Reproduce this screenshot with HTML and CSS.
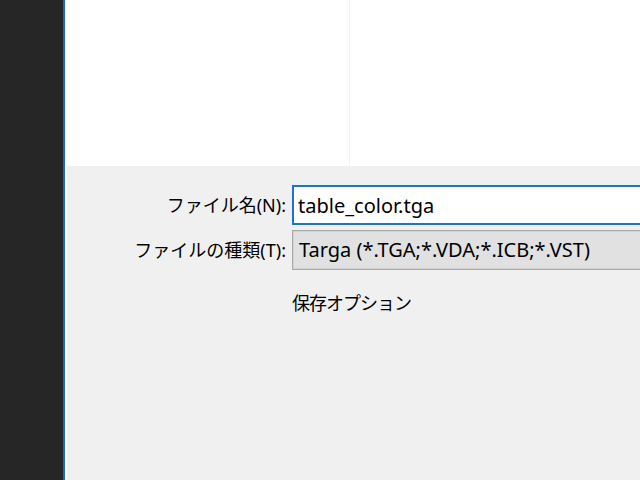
FILE: index.html
```html
<!DOCTYPE html>
<html lang="ja">
<head>
    <meta charset="UTF-8">
    <title>名前を付けて保存</title>
    <link rel="stylesheet" href="styles.css">
</head>
<body>
    <div class="side-dark"></div>

    <div class="save-dialog">
        <!-- ファイル一覧 -->
        <div class="file-list">
            <div class="file-col"></div>
            <div class="file-col"></div>
        </div>

        <!-- 下部フォーム -->
        <div class="save-panel">
            <div class="save-form">
                <label class="field-label">ファイル名(N):</label>
                <input type="text" class="name-box" value="table_color.tga">

                <label class="field-label">ファイルの種類(T):</label>
                <div class="type-box">Targa (*.TGA;*.VDA;*.ICB;*.VST)</div>
            </div>

            <div class="save-options">保存オプション</div>
        </div>
    </div>
</body>
</html>
```

FILE: styles.css
```css
* {
    margin: 0;
    padding: 0;
    box-sizing: border-box;
}

body {
    width: 640px;
    height: 480px;
    overflow: hidden;
    display: flex;
    background: #262626;
    font-family: "Noto Sans", "Noto Sans CJK JP", sans-serif;
    color: #000;
}

/* 左側の暗い領域 */
.side-dark {
    width: 63px;
    flex-shrink: 0;
    background: #262626;
}

/* ダイアログ本体 */
.save-dialog {
    flex: 1;
    display: flex;
    flex-direction: column;
    background: #fff;
    border-left: 2px solid #1568d0;
    min-width: 0;
}

/* ファイル一覧 */
.file-list {
    height: 166px;
    display: flex;
    background: #fff;
}
.file-col {
    width: 285px;
    border-right: 1px solid #f3f3f3;
}
.file-col + .file-col {
    flex: 1;
    border-right: none;
}

/* 下部パネル */
.save-panel {
    flex: 1;
    margin-left: 2px;
    background: #f0f0f0;
    padding-top: 19px;
}

.save-form {
    display: grid;
    grid-template-columns: 219px 1fr;
    column-gap: 6px;
    row-gap: 5px;
    align-items: center;
}

.field-label {
    text-align: right;
    font-size: 18px;
    line-height: 40px;
    white-space: nowrap;
}

/* 右端は画面外へ続く */
.name-box {
    width: 100%;
    height: 40px;
    border: 2px solid #1a72e0;
    border-right: none;
    background: #fff;
    padding: 0 4px;
    font-family: inherit;
    font-size: 20px;
    color: #000;
    outline: none;
}

.type-box {
    height: 40px;
    line-height: 37px;
    border: 1px solid #a9a9a9;
    border-right: none;
    box-shadow: inset 1px 1px 0 #d2d2d2, inset 0 -1px 0 #d2d2d2;
    background: #e1e1e1;
    padding: 0 6px;
    font-size: 20px;
    white-space: nowrap;
    overflow: hidden;
}

.save-options {
    margin: 19px 0 0 225px;
    font-size: 18px;
    line-height: 28px;
    letter-spacing: -1px;
}
```
